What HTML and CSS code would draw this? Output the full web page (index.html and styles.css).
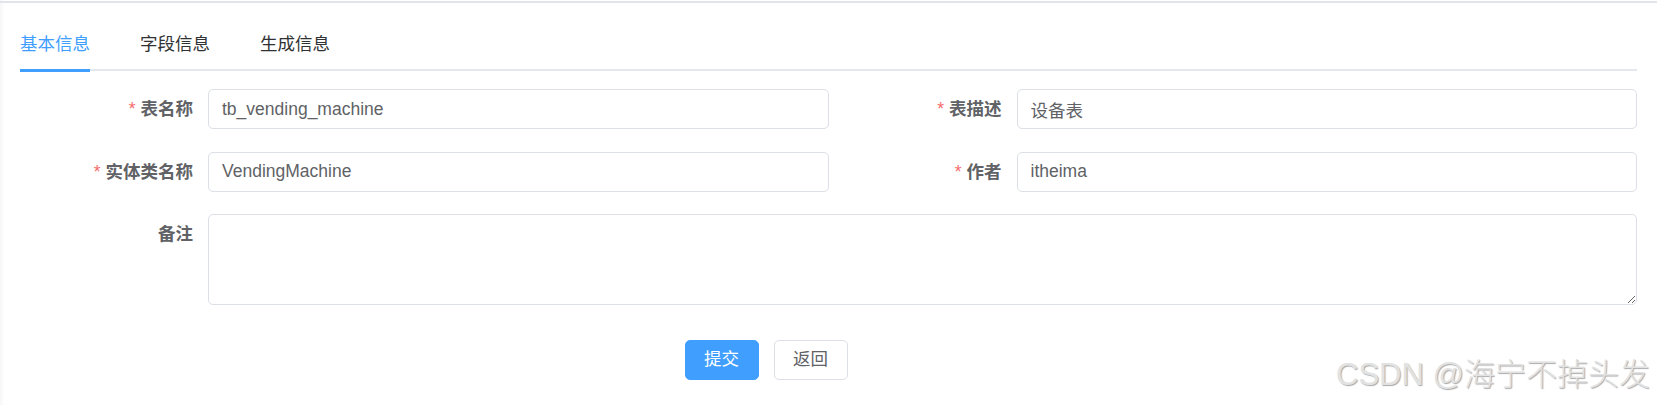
FILE: index.html
```html
<!DOCTYPE html>
<html lang="zh-CN">
<head>
<meta charset="utf-8">
<title>基本信息</title>
<link rel="stylesheet" href="styles.css">
</head>
<body>
<div class="page">
  <div class="topline"></div>
  <div class="container">
    <div class="tabs-nav">
      <div class="tab active">基本信息</div>
      <div class="tab">字段信息</div>
      <div class="tab">生成信息</div>
    </div>
    <form class="form">
      <div class="row two">
        <div class="item">
          <label class="label"><span class="req">*</span>表名称</label>
          <div class="control"><input class="input" type="text" value="tb_vending_machine"></div>
        </div>
        <div class="item">
          <label class="label"><span class="req">*</span>表描述</label>
          <div class="control"><input class="input" type="text" value="设备表"></div>
        </div>
      </div>
      <div class="row two">
        <div class="item">
          <label class="label"><span class="req">*</span>实体类名称</label>
          <div class="control"><input class="input" type="text" value="VendingMachine"></div>
        </div>
        <div class="item">
          <label class="label"><span class="req">*</span>作者</label>
          <div class="control"><input class="input" type="text" value="itheima"></div>
        </div>
      </div>
      <div class="row">
        <div class="item">
          <label class="label">备注</label>
          <div class="control"><textarea class="textarea"></textarea></div>
        </div>
      </div>
      <div class="actions">
        <button type="button" class="btn primary">提交</button>
        <button type="button" class="btn">返回</button>
      </div>
    </form>
  </div>
  <div class="watermark">CSDN @海宁不掉头发</div>
</div>
</body>
</html>
```
FILE: styles.css
```css
* { box-sizing: border-box; }
html, body { margin: 0; padding: 0; background: #fff; }
body {
  font-family: "Liberation Sans", "Noto Sans CJK SC", sans-serif;
  font-size: 17.5px;
  color: #606266;
}
.page {
  position: relative;
  width: 1657px;
  height: 405px;
  overflow: hidden;
  box-shadow: inset 5px 0 5px -4px rgba(0, 0, 0, 0.06);
}
.topline {
  height: 2px;
  margin-top: 1px;
  background: #e1e4ea;
}
.container {
  padding: 16px 20px 0 20px;
}
.tabs-nav {
  display: flex;
  border-bottom: 2.5px solid #e4e7ed;
}
.tab {
  position: relative;
  padding: 0 25px;
  height: 50px;
  line-height: 50px;
  font-size: 17.5px;
  color: #303133;
}
.tab:first-child { padding-left: 0; }
.tab.active { color: #409eff; }
.tab.active::after {
  content: "";
  position: absolute;
  left: 0;
  right: 25px;
  bottom: -2.5px;
  height: 2.5px;
  background: #409eff;
}
.form {
  margin-top: 18px;
}
.row {
  margin-bottom: 22.5px;
}
.row.two {
  display: grid;
  grid-template-columns: 1fr 1fr;
}
.item {
  display: flex;
  align-items: flex-start;
}
.label {
  flex: none;
  width: 188px;
  padding-right: 15px;
  text-align: right;
  line-height: 40px;
  font-weight: bold;
  color: #606266;
  font-size: 17.5px;
}
.req {
  color: #f56c6c;
  font-weight: normal;
  margin-right: 5px;
}
.control {
  flex: 1;
  min-width: 0;
}
.input, .textarea {
  display: block;
  width: 100%;
  border: 1px solid #dcdfe6;
  border-radius: 5px;
  font-family: "Liberation Sans", "Noto Sans CJK SC", sans-serif;
  font-size: 17.5px;
  color: #606266;
  background: #fff;
  outline: none;
}
.input {
  height: 40px;
  padding: 0 13px;
}
.textarea {
  height: 91px;
  padding: 6px 13px;
  resize: vertical;
}
.actions {
  display: flex;
  justify-content: center;
  gap: 15px;
  padding-top: 12.5px;
  margin-left: -125px;
}
.btn {
  height: 40px;
  padding: 0 18.5px;
  border: 1px solid #dcdfe6;
  border-radius: 5px;
  background: #fff;
  color: #606266;
  font-family: "Liberation Sans", "Noto Sans CJK SC", sans-serif;
  font-size: 17.5px;
  line-height: 1;
}
.btn.primary {
  background: #409eff;
  border-color: #409eff;
  color: #fff;
}
.watermark {
  position: absolute;
  left: 1336px;
  top: 359px;
  font-size: 31px;
  line-height: 31px;
  white-space: nowrap;
  color: #e2e2e2;
  font-weight: 300;
  text-shadow: 1px 1px 1px #a9a9a9;
}
```
